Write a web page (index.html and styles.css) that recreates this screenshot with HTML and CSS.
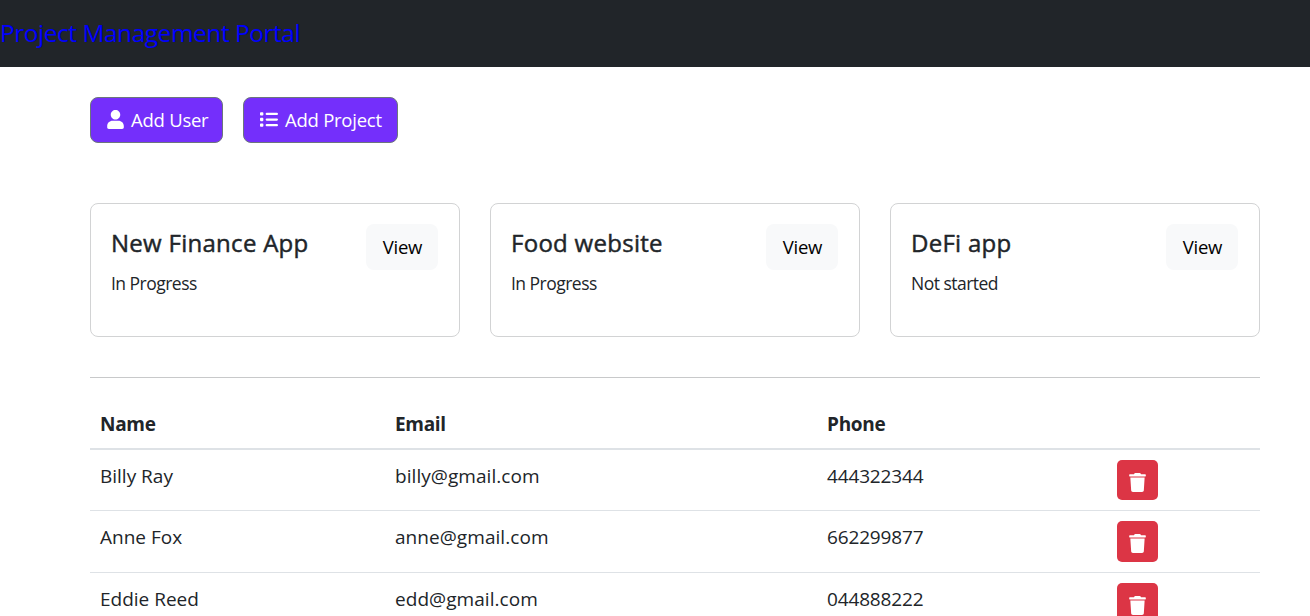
FILE: index.html
```html
<!DOCTYPE html>
<html lang="en">
<head>
<meta charset="utf-8">
<title>Project Management Portal</title>
<link rel="stylesheet" href="styles.css">
</head>
<body>
<svg class="sprite" aria-hidden="true">
  <symbol id="user" viewBox="0 0 448 512"><path d="M224 256c70.700 0 128-57.310 128-128s-57.300-128-128-128C153.300 0 96 57.310 96 128S153.300 256 224 256zM300 288H148C60 288 0 350 0 430V465C0 492 18 512 46 512H402C430 512 448 492 448 465V430C448 350 388 288 300 288z"/></symbol>
  <symbol id="list" viewBox="0 0 512 512"><path d="M24 48h48c13 0 24 11 24 24v48c0 13-11 24-24 24H24c-13 0-24-11-24-24V72c0-13 11-24 24-24zM24 208h48c13 0 24 11 24 24v48c0 13-11 24-24 24H24c-13 0-24-11-24-24v-48c0-13 11-24 24-24zM24 368h48c13 0 24 11 24 24v48c0 13-11 24-24 24H24c-13 0-24-11-24-24v-48c0-13 11-24 24-24zM192 64h288a32 32 0 0 1 0 64H192a32 32 0 0 1 0-64zM192 224h288a32 32 0 0 1 0 64H192a32 32 0 0 1 0-64zM192 384h288a32 32 0 0 1 0 64H192a32 32 0 0 1 0-64z"/></symbol>
  <symbol id="trash" viewBox="0 0 448 512"><path d="M135.200 17.690C140.600 6.848 151.700 0 163.800 0H284.200C296.300 0 307.400 6.848 312.800 17.690L320 32H430C440 32 448 40 448 50V82C448 90 442 96 434 96H14C6 96 0 90 0 82V50C0 40 8 32 18 32H128L135.200 17.690zM31.100 120H416L394.800 466.100C393.200 492.300 372.300 512 346.900 512H101.100C75.750 512 54.770 492.300 53.190 466.100L31.100 120z"/></symbol>
</svg>
<nav class="navbar"><a class="brand" href="#">Project Management Portal</a></nav>
<main class="container">
  <div class="actions">
    <button class="btn btn-action"><svg class="icon-user"><use href="#user"/></svg><span class="label-user">Add User</span></button>
    <button class="btn btn-action"><svg class="icon-list"><use href="#list"/></svg><span class="label-project">Add Project</span></button>
  </div>
  <section class="projects">
    <article class="card"><div><h5 class="card-title">New Finance App</h5><p class="status">In Progress</p></div><a class="btn btn-view">View</a></article>
    <article class="card"><div><h5 class="card-title">Food website</h5><p class="status">In Progress</p></div><a class="btn btn-view">View</a></article>
    <article class="card"><div><h5 class="card-title">DeFi app</h5><p class="status">Not started</p></div><a class="btn btn-view">View</a></article>
  </section>
  <hr class="divider">
  <table class="clients">
    <colgroup><col class="col-name"><col class="col-email"><col class="col-phone"><col></colgroup>
    <thead><tr><th>Name</th><th>Email</th><th>Phone</th><th></th></tr></thead>
    <tbody>
      <tr><td>Billy Ray</td><td class="email">billy@gmail.com</td><td class="phone">444322344</td><td><button class="btn-delete" aria-label="Delete"><svg class="icon-trash"><use href="#trash"/></svg></button></td></tr>
      <tr><td>Anne Fox</td><td class="email">anne@gmail.com</td><td class="phone">662299877</td><td><button class="btn-delete" aria-label="Delete"><svg class="icon-trash"><use href="#trash"/></svg></button></td></tr>
      <tr><td>Eddie Reed</td><td class="email">edd@gmail.com</td><td class="phone">044888222</td><td><button class="btn-delete" aria-label="Delete"><svg class="icon-trash"><use href="#trash"/></svg></button></td></tr>
    </tbody>
  </table>
</main>
</body>
</html>
```
FILE: styles.css
```css
* { box-sizing: border-box; }
html { height: 100%; overflow: hidden; }
body {
  margin: 0;
  height: 100%;
  overflow: hidden;
  background: #fff;
  color: #212529;
  font: 400 19px/30px "Open Sans", "Noto Sans", sans-serif;
}
.sprite { display: none; }
svg { display: block; fill: currentColor; flex: none; }
.navbar { display: flex; align-items: center; height: 67px; padding-bottom: 2px; background: #212529; }
.brand { color: #00f; font-size: 24.5px; text-decoration: none; letter-spacing: -0.48px; }
.container { width: 1170px; margin: 30px 0 0 90px; }
.actions { display: flex; gap: 20px; }
.btn {
  display: flex;
  align-items: center;
  height: 46px;
  padding: 0 15px;
  border: 1px solid transparent;
  border-radius: 8px;
  font: inherit;
  font-size: 18.5px;
  letter-spacing: -0.25px;
  white-space: nowrap;
}
.btn-action { background: #742ffb; border-color: #6c757d; color: #fff; gap: 7px; padding-left: 16px; }
.btn-action:first-child { width: 133px; }
.btn-action:last-child { width: 155px; }
.icon-user { width: 17px; height: 19px; margin-top: -1px; }
.icon-list { width: 18px; height: 19px; margin-top: -1px; }
.projects { display: grid; grid-template-columns: repeat(3, 370px); gap: 30px; margin-top: 60px; }
.card {
  display: flex;
  justify-content: space-between;
  align-items: flex-start;
  height: 134px;
  padding: 20px 21px 20px 20px;
  border: 1px solid #d2d3d4;
  border-radius: 8px;
}
.card-title {
  margin: 4px 0 10px;
  font-size: 24px;
  font-weight: 500;
  line-height: 30px;
  letter-spacing: 0.28px;
  -webkit-text-stroke: 0.45px currentColor;
}
.status { margin: 0; font-size: 17.5px; line-height: 30px; letter-spacing: -0.52px; }
.btn-view { width: 72px; background: #f8f9fa; color: #000; justify-content: center; padding: 0 0 0 1px; }
.divider { margin: 40px 0 30px; border: 0; border-top: 1px solid #c8c9ca; }
.clients { width: 100%; table-layout: fixed; border-spacing: 0; border-collapse: separate; }
.col-name { width: 295px; }
.col-email { width: 432px; }
.col-phone { width: 290px; }
th { height: 42px; padding: 0 10px 8px; border-bottom: 2px solid #dee2e6; text-align: left; font-weight: 700; line-height: 28px; letter-spacing: -0.3px; }
td { height: 62px; padding: 10px; border-bottom: 1px solid #dee2e6; vertical-align: top; line-height: 32px; }
tbody tr:first-child td { height: 61px; }
.email { letter-spacing: 0.06px; }
.phone { letter-spacing: -0.15px; }
.btn-delete {
  display: flex;
  width: 41px;
  height: 41px;
  padding: 4px 0 0;
  align-items: center;
  justify-content: center;
  border: 0;
  border-radius: 5px;
  background: #dc3545;
  color: #fff;
}
tbody tr:first-child .btn-delete { height: 40px; }
.icon-trash { width: 17px; height: 19px; }
```
